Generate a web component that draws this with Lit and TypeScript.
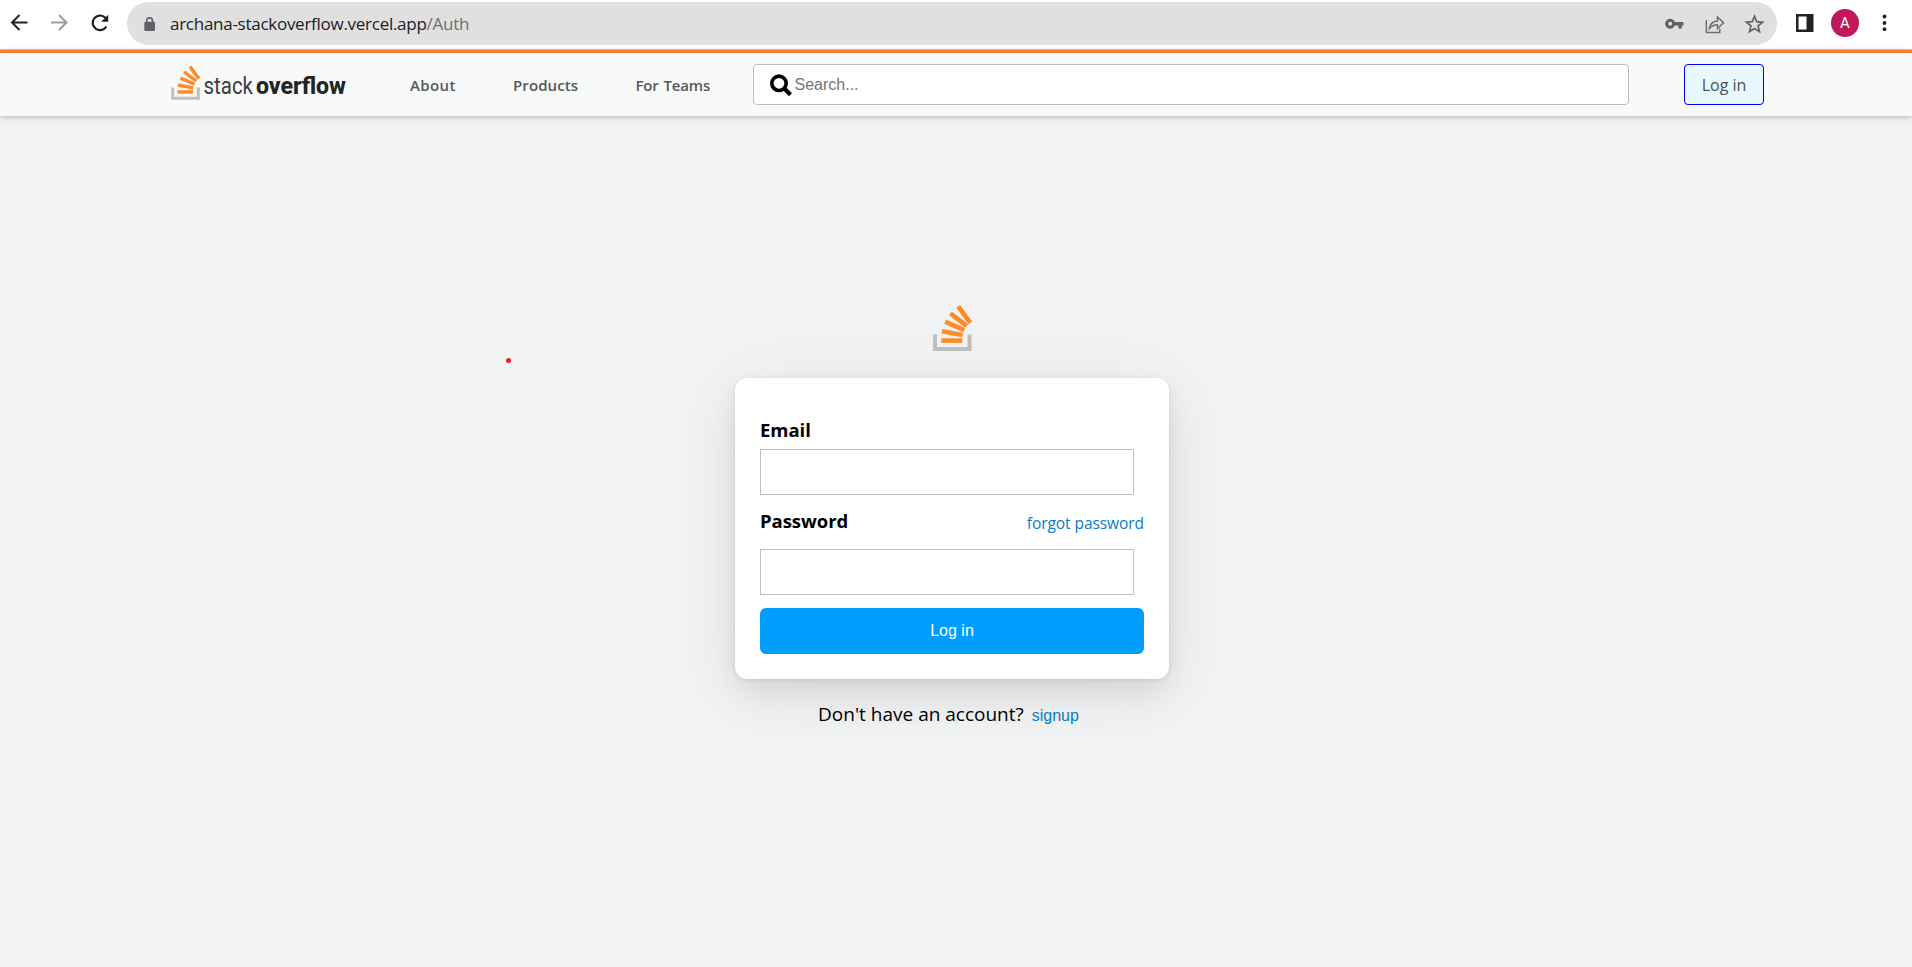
import { LitElement, html, css, svg } from "lit";
import { customElement } from "lit/decorators.js";

const bars = svg`
  <path d="M2 29.500v14.500h34.500v-14.500" fill="none" stroke="#bfbfbf" stroke-width="4"/>
  <g stroke="#ff8a26" stroke-width="4.600">
    <path d="M8.300 35.600h21"/>
    <path d="M9 26.200l20.600 3.800"/>
    <path d="M12.200 16.700l19 8.400"/>
    <path d="M17.400 8.400l16.300 12.400"/>
    <path d="M25.200 1.400l12.200 16.400"/>
  </g>`;

@customElement("browser-bar")
class BrowserBar extends LitElement {
  static styles = css`
    :host { display: flex; align-items: flex-start; background: #fff; border-bottom: 1px solid #c9cacd; box-sizing: border-box; height: 50px; font-family: "Open Sans", "Noto Sans", sans-serif; }
    svg { display: block; flex: none; }
    .nav { display: flex; flex: none; gap: 16px; padding: 11px 0 0 7px; width: 127px; box-sizing: border-box; }
    .pill { display: flex; align-items: center; flex: none; width: 1650px; height: 43px; margin-top: 2px; border-radius: 22px; background: #e0e0e0; box-sizing: border-box; padding: 0 11px 0 15px; }
    .url { flex: 1; margin-left: 13px; font-size: 17px; letter-spacing: -0.27px; line-height: 43px; color: #202124; }
    .path { color: #6b6e72; }
    .icons { display: flex; gap: 16px; }
    .side { display: flex; align-items: center; padding: 9px 0 0 16px; }
    .avatar { width: 28px; height: 28px; margin-left: 14px; border-radius: 50%; background: #c2185b; color: #fff; text-align: center; font: 15px/29px "Roboto", sans-serif; }
    .more { margin-left: 14px; }
  `;
  render() {
    return html`
      <div class="nav">
        <svg width="24" height="24" fill="none" stroke="#202124" stroke-width="2"><path d="M20.500 11.500H5.500M12.500 4l-7.500 7.500 7.500 7.500"/></svg>
        <svg width="24" height="24" fill="none" stroke="#9b9b9b" stroke-width="2"><path d="M4 11.500h15.500M12 4l7.500 7.500-7.500 7.500"/></svg>
        <svg width="24" height="24" fill="none" stroke="#202124" stroke-width="2.200"><path d="M19.300 15.500A7.300 7.300 0 1 1 17.800 6.300L20 8.500"/><path d="M21.200 3.800v7h-7z" fill="#202124" stroke="none"/></svg>
      </div>
      <div class="pill">
        <svg width="15" height="20" viewBox="0 0 15 20"><path d="M4.700 9V6.800a2.900 2.900 0 0 1 5.800 0V9" fill="none" stroke="#5f6368" stroke-width="1.600"/><rect x="2.300" y="7.800" width="10.700" height="9.200" rx="1.200" fill="#5f6368"/></svg>
        <div class="url">archana-stackoverflow.vercel.app<span class="path">/Auth</span></div>
        <div class="icons">
          <svg width="24" height="24" viewBox="0 0 24 24"><path fill="#5f6368" fill-rule="evenodd" d="M12.800 9.900H21.500v3.600h-1.700v3h-3.400v-3h-3.600a5 5 0 1 1 0-3.600zM8.200 9.700a2 2 0 1 0 0 4a2 2 0 0 0 0-4z"/></svg>
          <svg width="24" height="24" fill="none" stroke="#6b6e72" stroke-width="1.500"><path d="M4.300 8v12.500h13.500v-4"/><path d="M7.300 16.500c.8-5 4-7.200 8.200-7.500V5l6 5.800-6 5.700v-3.800c-3.700 0-6 1.200-8.200 3.800z"/></svg>
          <svg width="24" height="24" fill="none" stroke="#5f6368" stroke-width="1.700"><path d="M12.500 4.200l2.200 5.400 5.900.5-4.500 3.800 1.400 5.700-5-3.100-5 3.100 1.400-5.700-4.500-3.800 5.900-.5z"/></svg>
        </div>
      </div>
      <div class="side">
        <svg width="24" height="24"><path d="M3 3h17.500v18H3z" fill="#202124"/><path d="M5.500 5.500h8v13h-8z" fill="#fff"/></svg>
        <div class="avatar">A</div>
        <svg class="more" width="24" height="24" fill="#202124"><circle cx="11.500" cy="5.500" r="1.900"/><circle cx="11.500" cy="12" r="1.900"/><circle cx="11.500" cy="18.200" r="1.900"/></svg>
      </div>`;
  }
}

@customElement("site-header")
class SiteHeader extends LitElement {
  static styles = css`
    :host { display: flex; align-items: flex-start; height: 66px; box-sizing: border-box; border-top: 3px solid #f48236; background: #f8f9f9; padding: 11px 0 0 170px; position: relative; box-shadow: 0 1px 2px rgba(0,0,0,.05), 0 1px 4px rgba(0,0,0,.08), 0 2px 8px rgba(0,0,0,.12); font-family: "Open Sans", "Noto Sans", sans-serif; }
    .logo { display: block; width: 178px; height: 40px; }
    nav { display: flex; width: 405px; box-sizing: border-box; padding-left: 62px; }
    nav a { font-size: 15px; font-weight: 600; line-height: 42px; color: #55585a; white-space: nowrap; }
    .about { width: 103px; letter-spacing: .4px; }
    .products { width: 122.500px; letter-spacing: .1px; }
    .teams { word-spacing: 1px; letter-spacing: -.15px; }
    .search { display: flex; align-items: center; width: 876px; height: 41px; box-sizing: border-box; border: 1px solid #bcbcbc; border-radius: 4px; background: #fff; padding-left: 15px; color: #757575; font: 16px "Liberation Sans", Arial, sans-serif; }
    .search span { margin: 1px 0 0 .5px; }
    .login { width: 80px; height: 41px; box-sizing: border-box; margin-left: 55px; padding: 0; border: 1px solid #00f; border-radius: 4px; background: #e7f8fe; color: #4d4f51; font: 500 16px/41px "Open Sans", "Noto Sans", sans-serif; }
  `;
  render() {
    return html`
      <svg class="logo" viewBox="0 0 178 40">
        <g transform="translate(1.300 1.600) scale(.74)">${bars}</g>
        <text x="33.500" y="29.500" font-size="24" font-weight="400" font-family="Roboto, sans-serif" fill="#3a3d40" textLength="49.500" lengthAdjust="spacingAndGlyphs">stack</text>
        <text x="86" y="29.500" font-size="24" font-weight="800" font-family="Roboto, sans-serif" fill="#222426" textLength="90" lengthAdjust="spacingAndGlyphs">overflow</text>
      </svg>
      <nav><a class="about">About</a><a class="products">Products</a><a class="teams">For Teams</a></nav>
      <div class="search">
        <svg width="25" height="25" fill="none" stroke="#000"><circle cx="10" cy="11.300" r="7.200" stroke-width="3.600"/><path d="M15.500 16.800l6 6" stroke-width="4.200"/></svg>
        <span>Search...</span>
      </div>
      <button class="login">Log in</button>`;
  }
}

@customElement("login-panel")
class LoginPanel extends LitElement {
  static styles = css`
    :host { display: flex; flex-direction: column; align-items: center; padding: 189px 8px 0 0; font-family: "Open Sans", "Noto Sans", sans-serif; color: #000; }
    .mark { display: block; margin: 0 0 25px 2px; }
    .card { width: 434px; height: 301px; box-sizing: border-box; padding: 36px 25px 25px; border-radius: 12px; background: #fff; box-shadow: 0 10px 25px rgba(0,0,0,.05), 0 20px 48px rgba(0,0,0,.05), 0 10px 70px rgba(0,0,0,.05), 0 1px 4px rgba(0,0,0,.1); }
    .label { font-size: 18.500px; font-weight: 700; letter-spacing: -.05px; line-height: 32px; }
    .field { width: 374px; height: 46px; box-sizing: border-box; border: 1px solid #bfbfbf; background: #fff; }
    .email { margin-top: 3px; }
    .row { display: flex; justify-content: space-between; align-items: center; margin-top: 10px; height: 32px; }
    .forgot { margin-top: 4px; font-size: 15.500px; letter-spacing: -.07px; color: #0a7cc9; white-space: nowrap; }
    .password { margin-top: 12px; }
    .submit { display: block; width: 384px; height: 46px; margin-top: 13px; padding: 0; border: 0; border-radius: 6px; background: #009dff; color: #fff; font: 16px "Liberation Sans", Arial, sans-serif; }
    .foot { display: flex; align-items: baseline; margin-top: 20px; padding-right: 7px; line-height: 30px; font-size: 19px; white-space: nowrap; }
    .signup { margin-left: 8px; color: #0a7cc9; font: 16px "Liberation Sans", Arial, sans-serif; }
  `;
  render() {
    return html`
      <svg class="mark" width="40" height="48" viewBox="0 0 40 48">${bars}</svg>
      <div class="card">
        <div class="label">Email</div>
        <div class="field email"></div>
        <div class="row"><div class="label">Password</div><a class="forgot">forgot password</a></div>
        <div class="field password"></div>
        <button class="submit">Log in</button>
      </div>
      <div class="foot">Don't have an account?<a class="signup">signup</a></div>`;
  }
}

@customElement("app-root")
class AppRoot extends LitElement {
  static styles = css`
    :host { display: block; position: relative; width: 1912px; height: 967px; overflow: hidden; background: #f1f2f4; }
    .dot { position: absolute; left: 506px; top: 358px; width: 5px; height: 5px; border-radius: 50%; background: #ed1c24; }
  `;
  render() {
    return html`<browser-bar></browser-bar><site-header></site-header><login-panel></login-panel><div class="dot"></div>`;
  }
}
